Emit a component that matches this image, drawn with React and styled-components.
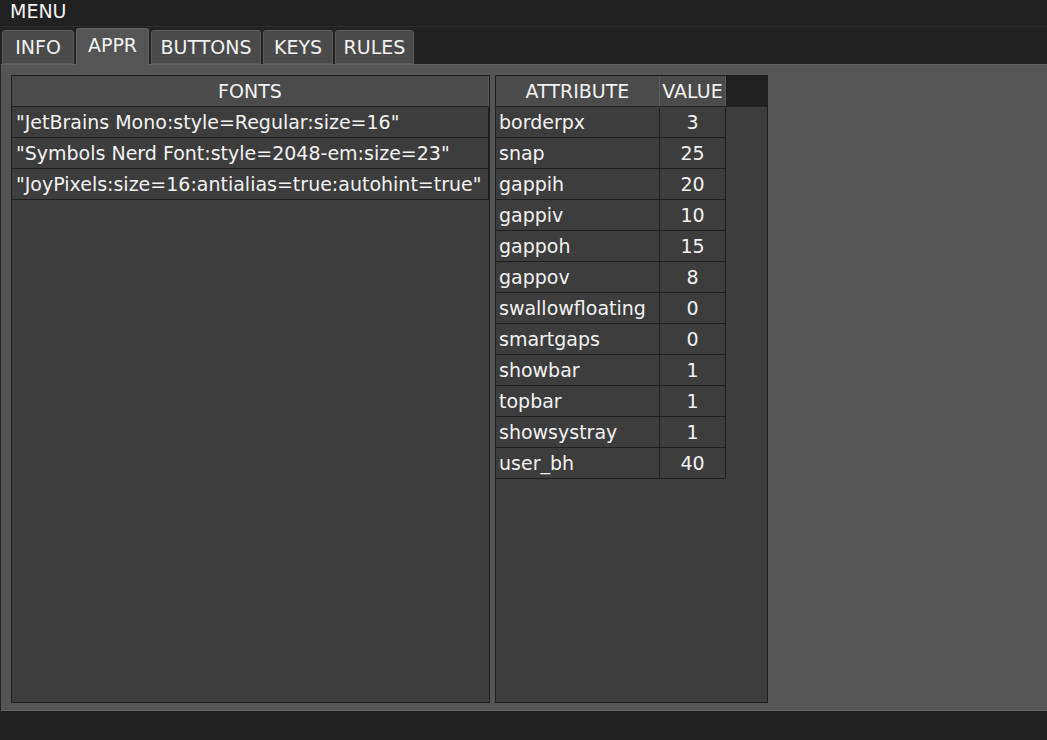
import styled, { createGlobalStyle } from "styled-components"

const GlobalStyle = createGlobalStyle`
  html, body {
    margin: 0;
    padding: 0;
    background: #222122;
  }
  body {
    font-family: "DejaVu Sans", "Lato", sans-serif;
    font-size: 19px;
    color: #f2f2f2;
  }
`

const fonts = [
  '"JetBrains Mono:style=Regular:size=16"',
  '"Symbols Nerd Font:style=2048-em:size=23"',
  '"JoyPixels:size=16:antialias=true:autohint=true"',
]

const attrs = [
  ["borderpx", 3],
  ["snap", 25],
  ["gappih", 20],
  ["gappiv", 10],
  ["gappoh", 15],
  ["gappov", 8],
  ["swallowfloating", 0],
  ["smartgaps", 0],
  ["showbar", 1],
  ["topbar", 1],
  ["showsystray", 1],
  ["user_bh", 40],
]

const tabs = [
  { label: "INFO", width: 72 },
  { label: "APPR", width: 73 },
  { label: "BUTTONS", width: 110 },
  { label: "KEYS", width: 70 },
  { label: "RULES", width: 79 },
]

const App = () => {
  return (
    <Window>
      <GlobalStyle />
      <MenuBar>MENU</MenuBar>
      <TabBar>
        {tabs.map((t) => (
          <Tab key={t.label} $w={t.width} $active={t.label === "APPR"}>
            {t.label}
          </Tab>
        ))}
      </TabBar>
      <Panel>
        <FontsTable>
          <HeaderCell>FONTS</HeaderCell>
          {fonts.map((f) => (
            <FontRow key={f}>{f}</FontRow>
          ))}
        </FontsTable>
        <AttrTable>
          <AttrHeader>
            <HeaderCell $w={164}>ATTRIBUTE</HeaderCell>
            <HeaderCell $w={66}>VALUE</HeaderCell>
            <HeaderFill />
          </AttrHeader>
          {attrs.map(([k, v]) => (
            <AttrRow key={k}>
              <NameCell>{k}</NameCell>
              <ValueCell>{v}</ValueCell>
            </AttrRow>
          ))}
        </AttrTable>
      </Panel>
      <StatusBar />
    </Window>
  )
}
export default App

const Window = styled.div`
  width: 1047px;
  height: 740px;
  display: flex;
  flex-direction: column;
  background: #232223;
  overflow: hidden;
`

const MenuBar = styled.div`
  height: 26px;
  line-height: 22px;
  padding-left: 10px;
  background: #222122;
  border-bottom: 1px solid #2e2d2e;
`

const TabBar = styled.div`
  height: 37px;
  display: flex;
  align-items: flex-end;
  gap: 2px;
  padding-left: 2px;
  background: #232223;
`

const Tab = styled.div`
  width: ${(p) => p.$w}px;
  height: ${(p) => (p.$active ? 37 : 34)}px;
  box-sizing: border-box;
  display: flex;
  align-items: center;
  justify-content: center;
  padding-bottom: ${(p) => (p.$active ? 4 : 0)}px;
  background: ${(p) => (p.$active ? "#555556" : "#4a4a4b")};
  border: 1px solid ${(p) => (p.$active ? "#626263" : "#5c5c5d")};
  border-bottom: ${(p) => (p.$active ? "none" : "1px solid #5c5c5d")};
  border-radius: 3px 3px 0 0;
  margin-bottom: ${(p) => (p.$active ? -1 : 0)}px;
  position: relative;
  z-index: ${(p) => (p.$active ? 1 : 0)};
`

const Panel = styled.div`
  height: 647px;
  box-sizing: border-box;
  margin-left: 1px;
  background: #555556;
  border-top: 1px solid #626263;
  border-bottom: 1px solid #666667;
  display: flex;
  align-items: flex-start;
  gap: 5px;
  padding: 10px 0 0 10px;
`

const Table = styled.div`
  height: 628px;
  box-sizing: border-box;
  background: #3d3d3d;
  border: 1px solid #1f1f1f;
  display: flex;
  flex-direction: column;
`

const FontsTable = styled(Table)`
  width: 479px;
`

const AttrTable = styled(Table)`
  width: 273px;
`

const HeaderCell = styled.div`
  height: 31px;
  box-sizing: border-box;
  width: ${(p) => (p.$w ? `${p.$w}px` : "auto")};
  display: flex;
  align-items: center;
  justify-content: center;
  background: #4b4b4c;
  border-right: 1px solid #5a5a5b;
  border-bottom: 1px solid #1f1f1f;
`

const FontRow = styled.div`
  height: 31px;
  width: 477px;
  box-sizing: border-box;
  padding-left: 4px;
  display: flex;
  align-items: center;
  white-space: nowrap;
  border-bottom: 1px solid #1f1f1f;
  border-right: 1px solid #1f1f1f;
`

const AttrHeader = styled.div`
  display: flex;
`

const HeaderFill = styled.div`
  flex: 1;
  height: 31px;
  background: #222122;
`

const AttrRow = styled.div`
  display: flex;
  height: 31px;
  width: 230px;
  box-sizing: border-box;
  border-bottom: 1px solid #1f1f1f;
  border-right: 1px solid #1f1f1f;
`

const NameCell = styled.div`
  width: 164px;
  box-sizing: border-box;
  padding-left: 3px;
  display: flex;
  align-items: center;
  border-right: 1px solid #1f1f1f;
`

const ValueCell = styled.div`
  flex: 1;
  display: flex;
  align-items: center;
  justify-content: center;
`

const StatusBar = styled.div`
  flex: 1;
  background: #222122;
`
